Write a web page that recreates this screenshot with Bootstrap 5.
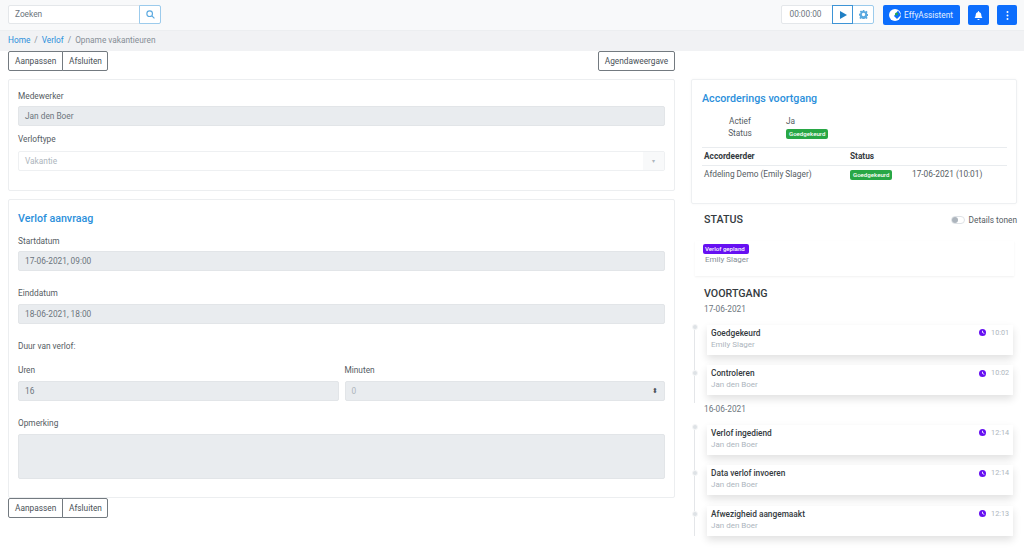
<!DOCTYPE html>
<html lang="nl">
<head>
<meta charset="utf-8">
<title>Opname vakantieuren</title>
<link href="https://cdn.jsdelivr.net/npm/bootstrap@5.3.0/dist/css/bootstrap.min.css" rel="stylesheet">
<style>
html,body{height:559px;overflow:hidden}
body{font-family:Roboto,"Liberation Sans",sans-serif;font-size:8.3px;line-height:12px;color:#555c63;background:#fff}
.topbar{height:31px;background:#f8f9fa;border-bottom:1px solid #eceef0;padding:5px 7px 0 8px}
.search-in{width:132px;height:19px;padding:0 6px;border:1px solid #e4e7ea;border-radius:2px 0 0 2px;background:#fff;color:#6c757d;line-height:17px}
.sq-out{height:19px;width:22px;border:1px solid #9ccbec;background:#fff;display:flex;align-items:center;justify-content:center;color:#5aa9e0;margin-left:-1px}
.sq-play{border-color:#3d94d6;color:#1f7fc4;width:21px;position:relative}
.sq-end{border-radius:0 2px 2px 0}
.timer{width:52px;height:19px;border:1px solid #e4e7ea;border-radius:2px 0 0 2px;background:#fff;color:#6c757d;text-align:center;line-height:17px;padding-right:3px}
.sq-fill{background:#0d6efd;border-radius:2px;height:20px;width:21px;display:flex;align-items:center;justify-content:center;color:#fff;margin-left:8px}
.sq-last{width:20px}
.effy{width:77px;color:#e6f0ff;gap:3px;margin-left:9px;padding-right:1px}
.crumbs{height:20px;background:#f1f2f4;padding:3px 8px 0;display:flex;gap:4px;color:#868e96;line-height:12px}
.crumbs a{color:#2b8fdb;text-decoration:none}
.crumbs i{font-style:normal;color:#868e96}
.pagewrap{padding:0 7px 0 8px;gap:16px}
.leftcol{width:667px}
.rightcol{width:326px;padding-top:28px}
.btn-wrap{height:19px}
.out-btn{height:20px;border:1px solid #737a80;background:#fff;color:#495057;font-size:8.3px;line-height:17px;padding:0 6px;border-radius:2px}
.out-btn.first{border-radius:2px 0 0 2px;width:55px}
.out-btn.second{border-radius:0 2px 2px 0;margin-left:-1px;width:46px}
.out-btn.agenda{width:77px;padding:0}
.box{border:1px solid #eceef0;border-radius:2px;background:#fff;padding:0 9px}
.box-a{height:112px;margin-top:9px;padding-top:10px}
.box-b{height:299px;margin-top:8px;padding-top:12px}
.lbl{margin:0;height:12px;line-height:12px;color:#555c63}
.gap-4px{margin-top:4px}
.gap-5px{margin-top:5px}
.gap-6px{margin-top:6px}
.gap-7px{margin-top:7px}
.gap-9px{margin-top:9px}
.gap-12px{margin-top:12px}
.gap-16px{margin-top:16px}
.fake-in{height:20px;background:#e9ecef;border:1px solid #e2e5e8;border-radius:2px;padding:0 6px;line-height:18px;color:#6c757d}
.fake-sel{height:20px;background:#fff;border:1px solid #eef0f2;border-radius:2px;padding:0 6px;line-height:18px;color:#adb5bd;position:relative}
.sel-arrow{position:absolute;right:0;top:0;bottom:0;width:21px;background:#f8f9fa;display:flex;align-items:center;justify-content:center;color:#adb5bd;font-size:6px}
.blue-h{color:#2b8fdb;font-size:10.7px;font-weight:500;line-height:14px;margin:0}
.sel-caret{position:absolute;right:6px;top:6px;font-size:7px;line-height:7px;color:#495057}
.muted-val{color:#adb5bd}
.cell-l{padding-right:3px}
.cell-r{padding-left:3px}
.area{height:45px}
.apcard{height:125px;padding:12px 10px 0;border:1px solid #eef0f2;border-radius:2px;box-shadow:0 0 3px rgba(0,0,0,.04)}
.kv{display:grid;grid-template-columns:84px 1fr;line-height:12px;margin-top:9px}
.kv span:nth-child(odd){text-align:center;padding-right:8px}
.bdg{display:inline-block;font-size:6.1px;line-height:10px;padding:0 3px;border-radius:2px;color:#fff;font-weight:500;vertical-align:middle;font-style:normal}
.bg-ok{background:#28a745}
.bg-pur{background:#6610f2}
.ap-table{display:grid;grid-template-columns:146px 62px 1fr;margin-top:8px;width:305px}
.ap-table div{padding:0 2px}
.thd{border-top:1px solid #e9ecef;border-bottom:1px solid #e9ecef;font-weight:700;height:19px;line-height:16px;color:#343a40}
.tbd{line-height:14px;margin-top:1px}
.sec-h{font-size:10.7px;font-weight:500;color:#343a40;line-height:14px;margin:0}
.status-head{height:37px;padding:9px 0 0 13px}
.detail-t{gap:4px;line-height:14px}
.swi{width:14px;height:8px;border:1px solid #dee2e6;border-radius:5px;background:#fff;position:relative;display:block}
.swi:before{content:"";position:absolute;left:0;top:0;width:6px;height:6px;border-radius:50%;background:#adb5bd}
.st-panel{margin:0 3px 0 4px;height:35px;padding:3px 0 0 8px;box-shadow:0 1px 2px rgba(0,0,0,.06)}
.st-panel p{margin:0;color:#868e96;font-size:8px;line-height:12px;padding-left:2px}
.bdg-wide{display:block;width:46px;white-space:nowrap;padding:0 2px}
.vh{padding-left:13px;margin-top:11px}
.dt{padding-left:13px;line-height:12px;color:#6c757d}
.dt-first{margin-top:2px}
.tl{position:relative;padding-left:16px}
.tl:before{content:"";position:absolute;left:3px;top:0;bottom:0;width:1px;background:#e4e6e9}
.tl-item{position:relative;height:30px;background:#fff;box-shadow:0 4px 8px rgba(0,0,0,.12);margin-right:4px;padding:2px 4px;margin-bottom:10.5px}
.tl-item:last-child{margin-bottom:0}
.tl-item:before{content:"";position:absolute;left:-15px;top:5px;width:6px;height:6px;border-radius:50%;background:#dee2e6;border:1px solid #f5f6f7}
.tl-item:first-child:before{top:-1px}
.tl-name{font-weight:500;color:#343a40;line-height:12px}
.tl-who{color:#adb5bd;font-size:8px;line-height:12px}
.tl-time{color:#adb5bd;gap:5px;font-size:7.2px}
.tl-time svg{display:block}
.tl-wrap1{margin-top:9.5px;height:78.5px}
.tl-wrap2{margin-top:9.5px}
</style>
</head>
<body>
<header class="topbar d-flex justify-content-between">
  <div class="d-flex">
    <div class="search-in">Zoeken</div>
    <div class="sq-out sq-end"><svg width="9" height="9" viewBox="0 0 16 16" fill="none" stroke="currentColor" stroke-width="2"><circle cx="6.500" cy="6.500" r="5"/><path d="M10.500 10.500 15 15"/></svg></div>
  </div>
  <div class="d-flex">
    <div class="timer">00:00:00</div>
    <div class="sq-out sq-play"><svg width="8" height="8" viewBox="0 0 8 8" fill="currentColor"><path d="M1 0 8 4 1 8Z"/></svg></div>
    <div class="sq-out sq-end"><svg width="9" height="9" viewBox="0 0 16 16" fill="currentColor"><path fill-rule="evenodd" d="M6.500 0h3l.4 2.200 1.400.6 1.900-1.300 2.100 2.100-1.300 1.900.6 1.400 2.200.4v3l-2.200.4-.6 1.400 1.300 1.900-2.100 2.100-1.900-1.300-1.400.6-.4 2.200h-3l-.4-2.200-1.400-.6-1.900 1.300-2.100-2.100 1.300-1.900-.6-1.400L0 9.500v-3l2.200-.4.6-1.400L1.500 2.800l2.100-2.100 1.900 1.300 1.400-.6zM8 5a3 3 0 1 0 0 6 3 3 0 0 0 0-6z"/></svg></div>
    <div class="sq-fill effy"><svg width="12" height="12" viewBox="0 0 12 12"><circle cx="6" cy="6" r="6" fill="#fff"/><path d="M5 7 9 1.500 12 6 8 10Z" fill="#0d6efd"/><circle cx="7.500" cy="5" r="1.500" fill="#28a745"/></svg><span>EffyAssistent</span></div>
    <div class="sq-fill"><svg width="9" height="9" viewBox="0 0 16 16" fill="currentColor"><path d="M8 16a2 2 0 0 0 2-2H6a2 2 0 0 0 2 2zM8 0a1 1 0 0 0-1 1v.6A5 5 0 0 0 3 6.500c0 1-.5 4.500-2 6h14c-1.500-1.500-2-5-2-6a5 5 0 0 0-4-4.900V1a1 1 0 0 0-1-1z"/></svg></div>
    <div class="sq-fill sq-last"><svg width="3" height="9" viewBox="0 0 3 9" fill="currentColor"><circle cx="1.500" cy="1" r="1"/><circle cx="1.500" cy="4.500" r="1"/><circle cx="1.500" cy="8" r="1"/></svg></div>
  </div>
</header>
<nav class="crumbs"><a href="#">Home</a><i>/</i><a href="#">Verlof</a><i>/</i><span>Opname vakantieuren</span></nav>
<main class="d-flex pagewrap">
  <section class="leftcol">
    <div class="d-flex justify-content-between btn-wrap">
      <div class="d-flex"><button class="out-btn first">Aanpassen</button><button class="out-btn second">Afsluiten</button></div>
      <button class="out-btn agenda">Agendaweergave</button>
    </div>
    <div class="box box-a">
      <p class="lbl">Medewerker</p>
      <div class="fake-in gap-4px">Jan den Boer</div>
      <p class="lbl gap-7px">Verloftype</p>
      <div class="fake-sel gap-6px">Vakantie<span class="sel-arrow">▾</span></div>
    </div>
    <div class="box box-b">
      <h2 class="blue-h">Verlof aanvraag</h2>
      <p class="lbl gap-9px">Startdatum</p>
      <div class="fake-in gap-4px">17-06-2021, 09:00</div>
      <p class="lbl gap-16px">Einddatum</p>
      <div class="fake-in gap-5px">18-06-2021, 18:00</div>
      <p class="lbl gap-16px">Duur van verlof:</p>
      <div class="row g-0 gap-12px">
        <div class="col-6 cell-l"><p class="lbl">Uren</p><div class="fake-in gap-5px">16</div></div>
        <div class="col-6 cell-r"><p class="lbl">Minuten</p><div class="fake-in position-relative gap-5px muted-val">0<span class="sel-caret">⬍</span></div></div>
      </div>
      <p class="lbl gap-16px">Opmerking</p>
      <div class="fake-in area gap-5px"></div>
    </div>
    <div class="d-flex"><button class="out-btn first">Aanpassen</button><button class="out-btn second">Afsluiten</button></div>
  </section>
  <aside class="rightcol">
    <div class="apcard">
      <h2 class="blue-h">Accorderings voortgang</h2>
      <div class="kv"><span>Actief</span><span>Ja</span><span>Status</span><span><em class="bdg bg-ok">Goedgekeurd</em></span></div>
      <div class="ap-table">
        <div class="thd">Accordeerder</div><div class="thd">Status</div><div class="thd"></div>
        <div class="tbd">Afdeling Demo (Emily Slager)</div><div class="tbd"><em class="bdg bg-ok">Goedgekeurd</em></div><div class="tbd">17-06-2021 (10:01)</div>
      </div>
    </div>
    <div class="d-flex justify-content-between status-head">
      <h3 class="sec-h">STATUS</h3>
      <div class="d-flex align-items-center detail-t align-self-start"><span class="swi"></span><span>Details tonen</span></div>
    </div>
    <div class="st-panel">
      <em class="bdg bg-pur bdg-wide">Verlof gepland</em>
      <p>Emily Slager</p>
    </div>
    <h3 class="sec-h vh">VOORTGANG</h3>
    <div class="dt dt-first">17-06-2021</div>
    <div class="tl tl-wrap1">
      <div class="tl-item"><div class="d-flex justify-content-between"><span class="tl-name">Goedgekeurd</span><span class="d-flex align-items-center tl-time"><svg width="7" height="7" viewBox="0 0 8 8"><circle cx="4" cy="4" r="4" fill="#6610f2"/><path d="M4 2v2l2 1" stroke="#fff" fill="none"/></svg>10:01</span></div><div class="tl-who">Emily Slager</div></div>
      <div class="tl-item"><div class="d-flex justify-content-between"><span class="tl-name">Controleren</span><span class="d-flex align-items-center tl-time"><svg width="7" height="7" viewBox="0 0 8 8"><circle cx="4" cy="4" r="4" fill="#6610f2"/><path d="M4 2v2l2 1" stroke="#fff" fill="none"/></svg>10:02</span></div><div class="tl-who">Jan den Boer</div></div>
    </div>
    <div class="dt">16-06-2021</div>
    <div class="tl tl-wrap2">
      <div class="tl-item"><div class="d-flex justify-content-between"><span class="tl-name">Verlof ingediend</span><span class="d-flex align-items-center tl-time"><svg width="7" height="7" viewBox="0 0 8 8"><circle cx="4" cy="4" r="4" fill="#6610f2"/><path d="M4 2v2l2 1" stroke="#fff" fill="none"/></svg>12:14</span></div><div class="tl-who">Jan den Boer</div></div>
      <div class="tl-item"><div class="d-flex justify-content-between"><span class="tl-name">Data verlof invoeren</span><span class="d-flex align-items-center tl-time"><svg width="7" height="7" viewBox="0 0 8 8"><circle cx="4" cy="4" r="4" fill="#6610f2"/><path d="M4 2v2l2 1" stroke="#fff" fill="none"/></svg>12:14</span></div><div class="tl-who">Jan den Boer</div></div>
      <div class="tl-item"><div class="d-flex justify-content-between"><span class="tl-name">Afwezigheid aangemaakt</span><span class="d-flex align-items-center tl-time"><svg width="7" height="7" viewBox="0 0 8 8"><circle cx="4" cy="4" r="4" fill="#6610f2"/><path d="M4 2v2l2 1" stroke="#fff" fill="none"/></svg>12:13</span></div><div class="tl-who">Jan den Boer</div></div>
    </div>
  </aside>
</main>
<script src="https://cdn.jsdelivr.net/npm/bootstrap@5.3.0/dist/js/bootstrap.bundle.min.js"></script>
</body>
</html>
